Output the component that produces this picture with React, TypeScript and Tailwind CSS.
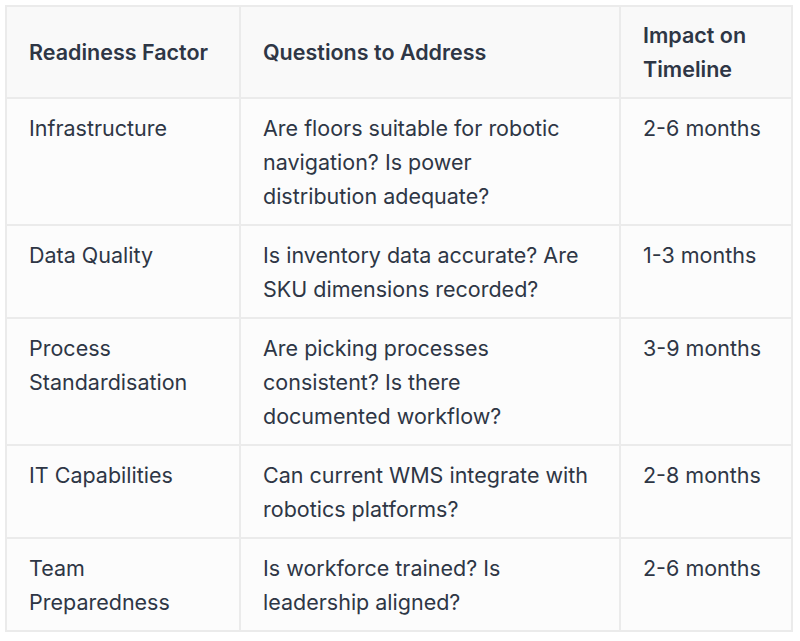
const ROWS = [
  {
    factor: "Infrastructure",
    questions: "Are floors suitable for robotic navigation? Is power distribution adequate?",
    impact: "2-6 months",
  },
  {
    factor: "Data Quality",
    questions: "Is inventory data accurate? Are SKU dimensions recorded?",
    impact: "1-3 months",
  },
  {
    factor: "Process Standardisation",
    questions: "Are picking processes consistent? Is there documented workflow?",
    impact: "3-9 months",
  },
  {
    factor: "IT Capabilities",
    questions: "Can current WMS integrate with robotics platforms?",
    impact: "2-8 months",
  },
  {
    factor: "Team Preparedness",
    questions: "Is workforce trained? Is leadership aligned?",
    impact: "2-6 months",
  },
];

export default function App() {
  return (
    <div
      className="min-h-[641px] w-[800px] bg-white pl-[5px] pt-[5px]"
      style={{ fontFamily: "Inter, 'Noto Sans', sans-serif" }}
    >
      <table className="w-[786px] table-fixed border-collapse border-2 border-[#ebebeb] text-[21.5px] leading-[34px] text-[#2e3645]">
        <colgroup>
          <col className="w-[234px]" />
          <col className="w-[380px]" />
          <col className="w-[172px]" />
        </colgroup>
        <thead>
          <tr className="bg-[#f9f9f9]">
            <th className="border-2 border-[#ebebeb] py-[11px] pl-[22px] pr-[22px] text-left align-middle font-semibold">
              Readiness Factor
            </th>
            <th className="border-2 border-[#ebebeb] py-[11px] pl-[22px] pr-[30px] text-left align-middle font-semibold">
              Questions to Address
            </th>
            <th className="border-2 border-[#ebebeb] py-[11px] pl-[22px] pr-[16px] text-left align-middle font-semibold">
              Impact on Timeline
            </th>
          </tr>
        </thead>
        <tbody>
          {ROWS.map((row) => (
            <tr key={row.factor} className="bg-[#fcfcfc]">
              <td className="border-2 border-[#ebebeb] py-[11.5px] pl-[22px] pr-[22px] align-top">{row.factor}</td>
              <td className="border-2 border-[#ebebeb] py-[11.5px] pl-[22px] pr-[30px] align-top">{row.questions}</td>
              <td className="border-2 border-[#ebebeb] py-[11.5px] pl-[22px] pr-[16px] align-top">{row.impact}</td>
            </tr>
          ))}
        </tbody>
      </table>
    </div>
  );
}
